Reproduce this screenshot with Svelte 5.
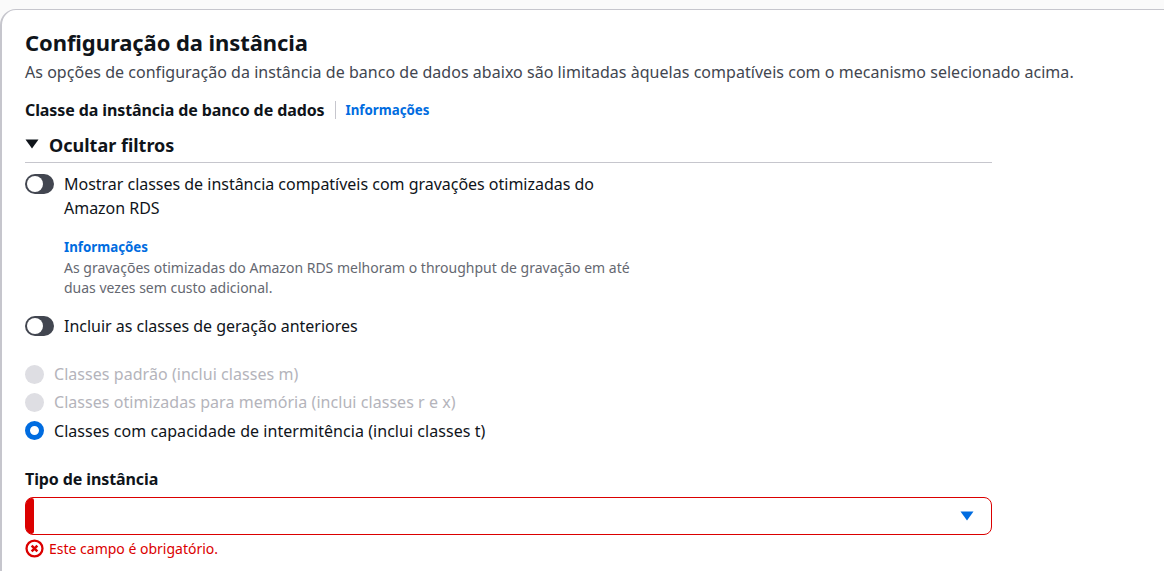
<script>
    let writeOptimized = false;
    let previousGen = false;
    let instanceClass = "burstable";

    const classes = [
        { id: "standard", label: "Classes padrão (inclui classes m)", disabled: true },
        { id: "memory", label: "Classes otimizadas para memória (inclui classes r e x)", disabled: true },
        { id: "burstable", label: "Classes com capacidade de intermitência (inclui classes t)", disabled: false },
    ];
</script>

<div class="page">
    <section class="card">
        <h2>Configuração da instância</h2>
        <p class="desc">As opções de configuração da instância de banco de dados abaixo são limitadas àquelas compatíveis com o mecanismo selecionado acima.</p>

        <div class="field-head">
            <span class="label">Classe da instância de banco de dados</span>
            <a href="#info" class="info">Informações</a>
        </div>

        <div class="content">
            <div class="expander">
                <svg class="caret" viewBox="0 0 14 10" width="14" height="10"><path d="M0.5 0.5h13L7 9.5z" fill="#0f141a" /></svg>
                <span>Ocultar filtros</span>
            </div>

            <div class="toggle-row first">
                <button class="toggle" class:on={writeOptimized} aria-label="Gravações otimizadas" onclick={() => (writeOptimized = !writeOptimized)}><span></span></button>
                <span class="toggle-text">Mostrar classes de instância compatíveis com gravações otimizadas do Amazon RDS</span>
            </div>

            <div class="hint">
                <a href="#info" class="info">Informações</a>
                <p>As gravações otimizadas do Amazon RDS melhoram o throughput de gravação em até duas vezes sem custo adicional.</p>
            </div>

            <div class="toggle-row second">
                <button class="toggle" class:on={previousGen} aria-label="Gerações anteriores" onclick={() => (previousGen = !previousGen)}><span></span></button>
                <span class="toggle-text">Incluir as classes de geração anteriores</span>
            </div>

            <div class="radios">
                {#each classes as c}
                    <label class="radio" class:disabled={c.disabled}>
                        <input type="radio" name="cls" value={c.id} disabled={c.disabled} bind:group={instanceClass} />
                        <span class="dot" class:checked={instanceClass === c.id}></span>
                        <span>{c.label}</span>
                    </label>
                {/each}
            </div>

            <div class="select-field">
                <span class="label">Tipo de instância</span>
                <div class="select">
                    <span class="bar"></span>
                    <svg viewBox="0 0 14 10" width="14" height="10"><path d="M0.5 0.5h13L7 9.5z" fill="#006ce0" /></svg>
                </div>
                <div class="error">
                    <svg viewBox="0 0 20 20" width="19" height="19">
                        <circle cx="10" cy="10" r="8.4" fill="none" stroke="#db0000" stroke-width="2.4" />
                        <path d="M7 7l6 6M13 7l-6 6" stroke="#db0000" stroke-width="2.6" fill="none" />
                    </svg>
                    <span>Este campo é obrigatório.</span>
                </div>
            </div>
        </div>
    </section>
</div>

<style>
    :global(body) {
        background: #fff;
        overflow: hidden;
        color: #0f141a;
        font-family: "Noto Sans", "Open Sans", sans-serif;
    }

    .page {
        background: #fafafa;
        padding-top: 9px;
        height: 562px;
        overflow: hidden;
    }

    .card {
        width: 1220px;
        height: 620px;
        box-sizing: border-box;
        background: #fff;
        border: 1px solid #c6c6cd;
        border-width: 1px 1px 1px 2px;
        border-radius: 16px;
        padding: 17px 23px;
    }

    h2 {
        margin: 0;
        font-size: 22px;
        line-height: 30px;
        font-weight: 700;
        letter-spacing: -0.08px;
    }

    .desc {
        margin: 4px 0 0;
        font-size: 16px;
        line-height: 22px;
        color: #424650;
        letter-spacing: 0.035px;
    }

    .field-head {
        display: flex;
        align-items: center;
        margin-top: 17px;
        height: 20px;
    }

    .label {
        font-size: 16px;
        font-weight: 700;
        line-height: 20px;
        letter-spacing: -0.1px;
    }

    .field-head .info {
        margin-left: 10px;
        padding-left: 10px;
        border-left: 1px solid #c6c6cd;
    }

    .info {
        font-size: 13.3px;
        line-height: 18px;
        font-weight: 700;
        color: #006ce0;
        text-decoration: none;
    }

    .content {
        width: 967px;
    }

    .expander {
        display: flex;
        align-items: center;
        gap: 10px;
        margin-top: 12px;
        height: 26px;
        padding-bottom: 4px;
        border-bottom: 1px solid #c6c6cd;
        font-size: 18px;
        font-weight: 700;
    }

    .caret {
        margin-top: -3px;
    }

    .toggle-row {
        display: flex;
        align-items: flex-start;
        gap: 10px;
        font-size: 16px;
        line-height: 24px;
        letter-spacing: -0.02px;
    }

    .toggle-row.first {
        margin-top: 9px;
    }

    .toggle-row.second {
        margin-top: 16px;
    }

    .toggle-text {
        width: 560px;
    }

    .toggle {
        flex: none;
        width: 29px;
        height: 20px;
        margin: 2px 0 0;
        padding: 0 0 0 2px;
        border: none;
        border-radius: 10px;
        background: #424650;
        display: flex;
        align-items: center;
    }

    .toggle span {
        width: 16px;
        height: 16px;
        border-radius: 50%;
        background: #fff;
    }

    .hint {
        margin: 18px 0 0 39px;
        width: 580px;
    }

    .hint .info {
        display: block;
    }

    .hint p {
        margin: 2px 0 0;
        font-size: 14px;
        line-height: 20px;
        color: #656871;
    }

    .radios {
        margin-top: 26px;
        display: flex;
        flex-direction: column;
        gap: 8.4px;
    }

    .radio {
        display: flex;
        align-items: center;
        gap: 10px;
        font-size: 16px;
        line-height: 20px;
        letter-spacing: 0.05px;
    }

    .radio.disabled {
        color: #b4b4bb;
    }

    .radio input {
        display: none;
    }

    .dot {
        flex: none;
        width: 19px;
        height: 19px;
        box-sizing: border-box;
        border-radius: 50%;
        background: #dedee3;
    }

    .dot.checked {
        background: #fff;
        border: 5.5px solid #006ce0;
    }

    .select-field {
        margin-top: 28px;
    }

    .select-field .label {
        display: block;
    }

    .select {
        margin-top: 8px;
        height: 38px;
        box-sizing: border-box;
        background: #fff;
        border: 1px solid #db0000;
        border-radius: 8px;
        display: flex;
        align-items: center;
        justify-content: space-between;
        padding-right: 17px;
    }

    .bar {
        align-self: stretch;
        width: 8px;
        background: #db0000;
        border-radius: 7px 3px 3px 7px;
    }

    .error {
        display: flex;
        align-items: center;
        gap: 5px;
        margin-top: 4px;
        font-size: 14px;
        line-height: 20px;
        color: #db0000;
    }
</style>
